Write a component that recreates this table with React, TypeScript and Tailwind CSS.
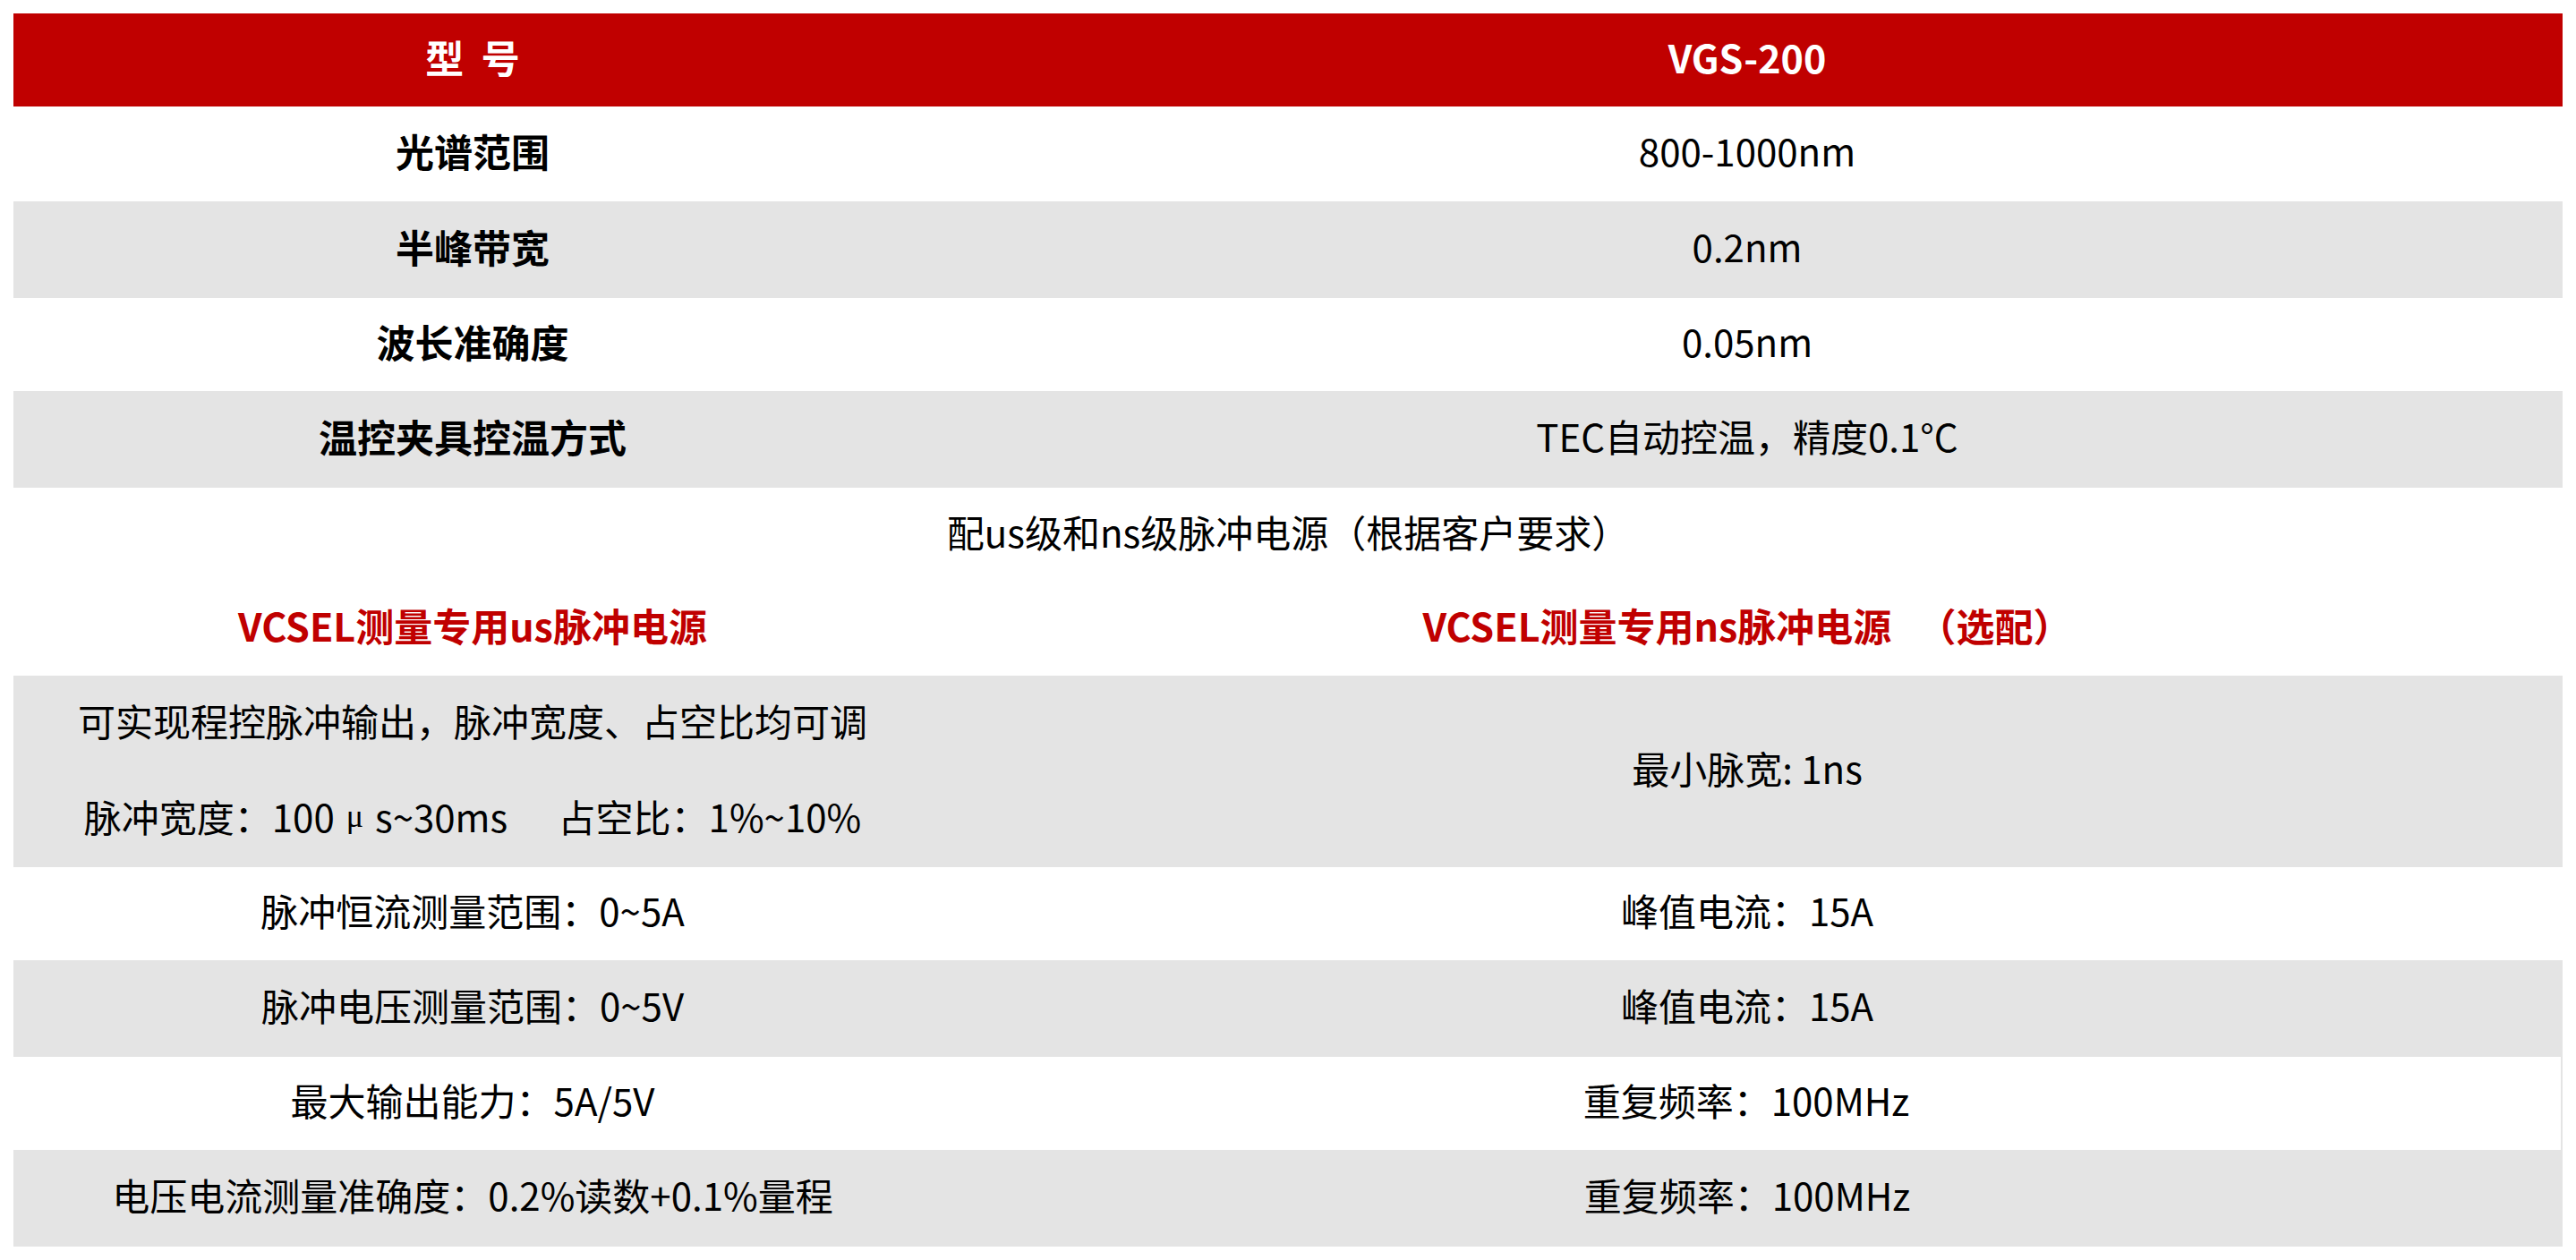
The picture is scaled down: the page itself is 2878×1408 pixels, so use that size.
import React from "react";

const RED = "text-[#c00000]";

function Row({
  h,
  gray,
  left,
  right,
  leftBold,
  extraRight,
}: {
  h: string;
  gray?: boolean;
  left: React.ReactNode;
  right: React.ReactNode;
  leftBold?: boolean;
  extraRight?: string;
}) {
  return (
    <div className={`grid grid-cols-[1026px_1fr] ${h} ${gray ? "bg-[#e4e4e4]" : "bg-white"}`}>
      <div className={`flex items-center justify-center pb-2 ${leftBold ? "font-bold text-[43px]" : ""}`}>{left}</div>
      <div className={`flex items-center justify-center pb-2 ${extraRight ?? ""}`}>{right}</div>
    </div>
  );
}

export default function App() {
  return (
    <div className="min-h-screen w-full bg-white p-[15px] font-['Noto_Sans_CJK_SC','Noto_Sans',sans-serif] text-[42px] leading-none text-black">
      <div className="flex flex-col">
        <div className="grid h-[104px] grid-cols-[1026px_1fr] bg-[#c00000] text-[43px] font-bold text-white">
          <div className="flex items-center justify-center whitespace-pre pb-2">型  号</div>
          <div className="flex items-center justify-center pb-2">VGS-200</div>
        </div>
        <Row h="h-[106px]" left="光谱范围" right="800-1000nm" leftBold />
        <Row h="h-[108px]" gray left="半峰带宽" right="0.2nm" leftBold />
        <Row h="h-[104px]" left="波长准确度" right="0.05nm" leftBold />
        <Row h="h-[108px]" gray left="温控夹具控温方式" right="TEC自动控温，精度0.1°C" leftBold />
        <div className="flex h-[105px] items-center justify-center bg-white pb-2">
          配us级和ns级脉冲电源（根据客户要求）
        </div>
        <div className={`grid h-[105px] grid-cols-[1026px_1fr] bg-white text-[43px] font-bold ${RED}`}>
          <div className="flex items-center justify-center pb-2">VCSEL测量专用us脉冲电源</div>
          <div className="flex items-center justify-center whitespace-pre pb-2">VCSEL测量专用ns脉冲电源   （选配）</div>
        </div>
        <div className="grid h-[214px] grid-cols-[1026px_1fr] bg-[#e4e4e4]">
          <div className="flex flex-col">
            <div className="flex h-[107px] items-center justify-center pb-2">可实现程控脉冲输出，脉冲宽度、占空比均可调</div>
            <div className="flex h-[107px] items-center justify-center whitespace-pre pb-2">
              脉冲宽度：100
              <span className="mx-[4px] font-['Liberation_Serif',serif] text-[36px]"> μ </span>
              s~30ms{"      "}占空比：1%~10%
            </div>
          </div>
          <div className="flex items-center justify-center pb-2">最小脉宽: 1ns</div>
        </div>
        <Row h="h-[104px]" left="脉冲恒流测量范围：0~5A" right="峰值电流：15A" />
        <Row h="h-[108px]" gray left="脉冲电压测量范围：0~5V" right="峰值电流：15A" />
        <Row
          h="h-[104px]"
          left="最大输出能力：5A/5V"
          right="重复频率：100MHz"
          extraRight="border-r-2 border-[#e4e4e4]"
        />
        <Row h="h-[108px]" gray left="电压电流测量准确度：0.2%读数+0.1%量程" right="重复频率：100MHz" />
      </div>
    </div>
  );
}
